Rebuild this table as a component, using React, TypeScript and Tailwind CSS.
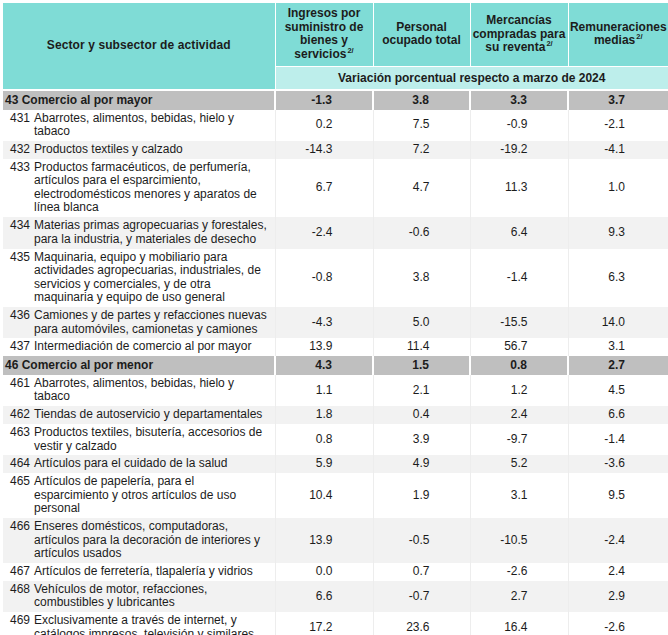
import React from 'react';

type Row = {
  code: string;
  lines: string[];
  values: string[];
  total?: boolean;
};

const rows: Row[] = [
  { code: '43', lines: ['Comercio al por mayor'], values: ['-1.3', '3.8', '3.3', '3.7'], total: true },
  { code: '431', lines: ['Abarrotes, alimentos, bebidas, hielo y', 'tabaco'], values: ['0.2', '7.5', '-0.9', '-2.1'] },
  { code: '432', lines: ['Productos textiles y calzado'], values: ['-14.3', '7.2', '-19.2', '-4.1'] },
  {
    code: '433',
    lines: [
      'Productos farmacéuticos, de perfumería,',
      'artículos para el esparcimiento,',
      'electrodomésticos menores y aparatos de',
      'línea blanca',
    ],
    values: ['6.7', '4.7', '11.3', '1.0'],
  },
  {
    code: '434',
    lines: ['Materias primas agropecuarias y forestales,', 'para la industria, y materiales de desecho'],
    values: ['-2.4', '-0.6', '6.4', '9.3'],
  },
  {
    code: '435',
    lines: [
      'Maquinaria, equipo y mobiliario para',
      'actividades agropecuarias, industriales, de',
      'servicios y comerciales, y de otra',
      'maquinaria y equipo de uso general',
    ],
    values: ['-0.8', '3.8', '-1.4', '6.3'],
  },
  {
    code: '436',
    lines: ['Camiones y de partes y refacciones nuevas', 'para automóviles, camionetas y camiones'],
    values: ['-4.3', '5.0', '-15.5', '14.0'],
  },
  { code: '437', lines: ['Intermediación de comercio al por mayor'], values: ['13.9', '11.4', '56.7', '3.1'] },
  { code: '46', lines: ['Comercio al por menor'], values: ['4.3', '1.5', '0.8', '2.7'], total: true },
  { code: '461', lines: ['Abarrotes, alimentos, bebidas, hielo y', 'tabaco'], values: ['1.1', '2.1', '1.2', '4.5'] },
  { code: '462', lines: ['Tiendas de autoservicio y departamentales'], values: ['1.8', '0.4', '2.4', '6.6'] },
  {
    code: '463',
    lines: ['Productos textiles, bisutería, accesorios de', 'vestir y calzado'],
    values: ['0.8', '3.9', '-9.7', '-1.4'],
  },
  { code: '464', lines: ['Artículos para el cuidado de la salud'], values: ['5.9', '4.9', '5.2', '-3.6'] },
  {
    code: '465',
    lines: ['Artículos de papelería, para el', 'esparcimiento y otros artículos de uso', 'personal'],
    values: ['10.4', '1.9', '3.1', '9.5'],
  },
  {
    code: '466',
    lines: ['Enseres domésticos, computadoras,', 'artículos para la decoración de interiores y', 'artículos usados'],
    values: ['13.9', '-0.5', '-10.5', '-2.4'],
  },
  { code: '467', lines: ['Artículos de ferretería, tlapalería y vidrios'], values: ['0.0', '0.7', '-2.6', '2.4'] },
  {
    code: '468',
    lines: ['Vehículos de motor, refacciones,', 'combustibles y lubricantes'],
    values: ['6.6', '-0.7', '2.7', '2.9'],
  },
  {
    code: '469',
    lines: ['Exclusivamente a través de internet, y', 'catálogos impresos, televisión y similares'],
    values: ['17.2', '23.6', '16.4', '-2.6'],
  },
];

function Sup() {
  return <span className="relative -top-[5px] text-[7.5px] leading-none ml-[1px]">2/</span>;
}

export default function App() {
  let stripe = 0;

  return (
    <div className="bg-white w-[668px] h-[635px] overflow-hidden pt-[3px] pl-[3px] text-[#1c1c1c] font-['Liberation_Sans',Arial,sans-serif]">
      <table className="table-fixed border-collapse w-[665px] text-[12px]">
        <colgroup>
          <col className="w-[272px]" />
          <col className="w-[98px]" />
          <col className="w-[97px]" />
          <col className="w-[98px]" />
          <col className="w-[100px]" />
        </colgroup>
        <thead>
          <tr className="h-[63px] bg-[#7fdcd6] font-bold leading-[13.5px] text-center">
            <th rowSpan={2} className="border-r border-b-2 border-white align-middle font-bold tracking-[0.1px]">
              Sector y subsector de actividad
            </th>
            <th className="border-r border-white font-bold px-1">
              Ingresos por
              <br />
              suministro de
              <br />
              bienes y
              <br />
              servicios
              <Sup />
            </th>
            <th className="border-r border-white font-bold">
              Personal
              <br />
              ocupado total
            </th>
            <th className="border-r border-white font-bold">
              Mercancías
              <br />
              compradas para
              <br />
              su reventa
              <Sup />
            </th>
            <th className="font-bold">
              Remuneraciones
              <br />
              medias
              <Sup />
            </th>
          </tr>
          <tr className="h-[24px] bg-[#bdeeeb] border-t border-white">
            <th colSpan={4} className="font-bold text-center border-b-2 border-white">
              Variación porcentual respecto a marzo de 2024
            </th>
          </tr>
        </thead>
        <tbody className="leading-[13.5px]">
          {rows.map((row) => {
            if (row.total) {
              stripe = 0;
              return (
                <tr key={row.code} className="bg-[#bfbfbf] font-bold">
                  <td className="pt-[3px] pb-[2px] pl-[2px] border-r-2 border-white">
                    {row.code} {row.lines[0]}
                  </td>
                  {row.values.map((v, i) => (
                    <td
                      key={i}
                      className={`pt-[3px] pb-[2px] text-right align-middle ${i === 3 ? 'pr-[43px]' : 'pr-[40px] border-r-2 border-white'}`}
                    >
                      {v}
                    </td>
                  ))}
                </tr>
              );
            }
            const gray = stripe % 2 === 1;
            stripe += 1;
            return (
              <tr key={row.code} className={gray ? 'bg-[#f2f2f2]' : 'bg-white'}>
                <td className="py-[2.2px] pl-[7px] border-r border-[#ededed] align-middle">
                  <div className="flex">
                    <span className="w-[24px] shrink-0">{row.code}</span>
                    <span>
                      {row.lines.map((l, i) => (
                        <span key={i} className="block whitespace-nowrap">
                          {l}
                        </span>
                      ))}
                    </span>
                  </div>
                </td>
                {row.values.map((v, i) => (
                  <td
                    key={i}
                    className={`py-[2.2px] text-right align-middle ${i === 3 ? 'pr-[43px]' : 'pr-[40px] border-r border-[#ededed]'}`}
                  >
                    {v}
                  </td>
                ))}
              </tr>
            );
          })}
        </tbody>
      </table>
    </div>
  );
}
